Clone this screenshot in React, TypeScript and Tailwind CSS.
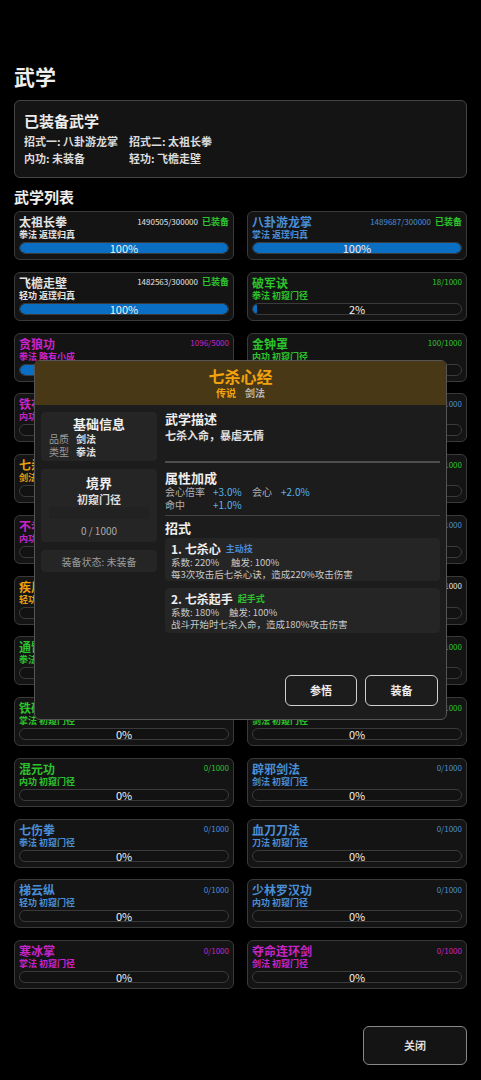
import React from 'react';

// ── 데이터 ────────────────────────────────────────────────────────────────

type Tone = 'white' | 'blue' | 'green' | 'purple' | 'orange';

const TONES: Record<Tone, string> = {
  white: 'text-[#e4e4e4]',
  blue: 'text-[#4a8fd6]',
  green: 'text-[#2cc42c]',
  purple: 'text-[#c824c8]',
  orange: 'text-[#e8a010]',
};

type Skill = {
  name: string;
  tone: Tone;
  prog: string;
  type: string;
  level: string;
  pct: number;
  equipped?: boolean;
};

const SKILLS: Skill[] = [
  { name: '太祖长拳', tone: 'white', prog: '1490505/300000', type: '拳法', level: '返璞归真', pct: 100, equipped: true },
  { name: '八卦游龙掌', tone: 'blue', prog: '1489687/300000', type: '掌法', level: '返璞归真', pct: 100, equipped: true },
  { name: '飞檐走壁', tone: 'white', prog: '1482563/300000', type: '轻功', level: '返璞归真', pct: 100, equipped: true },
  { name: '破军诀', tone: 'green', prog: '18/1000', type: '拳法', level: '初窥门径', pct: 2 },
  { name: '贪狼功', tone: 'purple', prog: '1096/5000', type: '拳法', level: '略有小成', pct: 22 },
  { name: '金钟罩', tone: 'green', prog: '100/1000', type: '内功', level: '初窥门径', pct: 10 },
  { name: '铁布衫', tone: 'purple', prog: '0/1000', type: '内功', level: '初窥门径', pct: 0 },
  { name: '太极剑', tone: 'blue', prog: '0/1000', type: '剑法', level: '初窥门径', pct: 0 },
  { name: '七杀心经', tone: 'orange', prog: '0/1000', type: '剑法', level: '初窥门径', pct: 0 },
  { name: '罗汉拳', tone: 'green', prog: '0/1000', type: '拳法', level: '初窥门径', pct: 0 },
  { name: '不老长春功', tone: 'purple', prog: '0/1000', type: '内功', level: '初窥门径', pct: 0 },
  { name: '草上飞', tone: 'blue', prog: '0/1000', type: '轻功', level: '初窥门径', pct: 0 },
  { name: '疾风步', tone: 'orange', prog: '0/1000', type: '轻功', level: '初窥门径', pct: 0 },
  { name: '长拳', tone: 'white', prog: '0/1000', type: '拳法', level: '初窥门径', pct: 0 },
  { name: '通臂拳', tone: 'green', prog: '0/1000', type: '拳法', level: '初窥门径', pct: 0 },
  { name: '开山掌', tone: 'green', prog: '0/1000', type: '掌法', level: '初窥门径', pct: 0 },
  { name: '铁砂掌', tone: 'green', prog: '0/1000', type: '掌法', level: '初窥门径', pct: 0 },
  { name: '清风剑法', tone: 'green', prog: '0/1000', type: '剑法', level: '初窥门径', pct: 0 },
  { name: '混元功', tone: 'green', prog: '0/1000', type: '内功', level: '初窥门径', pct: 0 },
  { name: '辟邪剑法', tone: 'blue', prog: '0/1000', type: '剑法', level: '初窥门径', pct: 0 },
  { name: '七伤拳', tone: 'blue', prog: '0/1000', type: '拳法', level: '初窥门径', pct: 0 },
  { name: '血刀刀法', tone: 'blue', prog: '0/1000', type: '刀法', level: '初窥门径', pct: 0 },
  { name: '梯云纵', tone: 'blue', prog: '0/1000', type: '轻功', level: '初窥门径', pct: 0 },
  { name: '少林罗汉功', tone: 'blue', prog: '0/1000', type: '内功', level: '初窥门径', pct: 0 },
  { name: '寒冰掌', tone: 'purple', prog: '0/1000', type: '掌法', level: '初窥门径', pct: 0 },
  { name: '夺命连环剑', tone: 'purple', prog: '0/1000', type: '剑法', level: '初窥门径', pct: 0 },
];

// ── 카드 ──────────────────────────────────────────────────────────────────

function SkillCard({ s }: { s: Skill }) {
  const tone = TONES[s.tone];
  return (
    <div className="h-[49px] rounded-[6px] border-[1.5px] border-[#3a3a3a] bg-[#141414] px-[4px] pt-[2px]">
      <div className="flex h-[15px] items-center justify-between">
        <span className={`text-[12px] font-bold leading-[15px] ${tone}`}>{s.name}</span>
        <span className="flex items-center gap-[4px]">
          <span className={`text-[8px] leading-[10px] ${tone}`}>{s.prog}</span>
          {s.equipped && <span className="text-[9px] font-bold leading-[10px] text-[#2cc42c]">已装备</span>}
        </span>
      </div>
      <div className={`h-[12px] text-[9px] font-bold leading-[12px] ${tone}`}>
        {s.type} {s.level}
      </div>
      <div className="relative mt-[1px] h-[12px]">
        <div className="h-full overflow-hidden rounded-full border border-[#3a3a3a] bg-[#121212]">
          <div className="h-full rounded-full bg-[#0a6fc2]" style={{ width: `${s.pct}%` }} />
        </div>
        <span className="absolute inset-x-0 top-0 text-center text-[11px] leading-[12px] text-[#f0f0f0]">
          {s.pct}%
        </span>
      </div>
    </div>
  );
}

// ── 모달 ──────────────────────────────────────────────────────────────────

function DetailModal() {
  return (
    <div className="absolute left-[34px] top-[360px] flex h-[360px] w-[413px] flex-col overflow-hidden rounded-[6px] border border-[#555] bg-[#1c1c1c]">
      {/* 헤더 */}
      <div className="flex h-[44px] shrink-0 flex-col items-center justify-center bg-[#483816]">
        <div className="text-[16px] font-bold leading-[19px] text-[#f2a20c]">七杀心经</div>
        <div className="flex gap-[9px] text-[10px] font-bold leading-[14px]">
          <span className="text-[#f2a20c]">传说</span>
          <span className="text-[#b8b8b8]">剑法</span>
        </div>
      </div>

      <div className="flex flex-1 gap-[8px] px-[6px] pt-[7px]">
        {/* 왼쪽 */}
        <div className="flex w-[116px] shrink-0 flex-col gap-[8px]">
          <div className="rounded-[4px] bg-[#252525] px-[8px] pb-[3px] pt-[3px]">
            <div className="text-center text-[13px] font-bold leading-[17px] text-[#eee]">基础信息</div>
            <div className="flex gap-[7px] text-[10px] leading-[13px]">
              <span className="text-[#9a9a9a]">品质</span>
              <span className="font-bold text-[#e0e0e0]">剑法</span>
            </div>
            <div className="flex gap-[7px] text-[10px] leading-[13px]">
              <span className="text-[#9a9a9a]">类型</span>
              <span className="font-bold text-[#e0e0e0]">拳法</span>
            </div>
          </div>
          <div className="rounded-[4px] bg-[#252525] px-[8px] pb-[4px] pt-[6px] text-center">
            <div className="text-[13px] font-bold leading-[16px] text-[#eee]">境界</div>
            <div className="text-[11px] font-bold leading-[16px] text-[#ddd]">初窥门径</div>
            <div className="h-[12px] rounded-[3px] bg-[#222]" />
            <div className="mt-[5px] text-[10px] leading-[14px] text-[#aaa]">0 / 1000</div>
          </div>
          <div className="flex h-[22px] items-center justify-center rounded-[4px] bg-[#252525] text-[10px] text-[#9a9a9a]">
            装备状态: 未装备
          </div>
        </div>

        {/* 오른쪽 */}
        <div className="flex flex-1 flex-col">
          <div className="text-[13px] font-bold leading-[14px] text-[#eee]">武学描述</div>
          <div className="mt-[2px] text-[11px] font-bold leading-[14px] text-[#e0e0e0]">七杀入命，暴虐无情</div>
          <div className="mt-[19px] h-[2px] bg-[#4e4e4e]" />
          <div className="mt-[7px] text-[13px] font-bold leading-[15px] text-[#eee]">属性加成</div>
          <div className="grid grid-cols-[48px_39px_29px_auto] text-[10px] leading-[13px]">
            <span className="text-[#b0b0b0]">会心倍率</span>
            <span className="text-[#5ab4e6]">+3.0%</span>
            <span className="text-[#b0b0b0]">会心</span>
            <span className="text-[#5ab4e6]">+2.0%</span>
            <span className="text-[#b0b0b0]">命中</span>
            <span className="text-[#5ab4e6]">+1.0%</span>
          </div>
          <div className="mt-[4px] h-px bg-[#444]" />
          <div className="mt-[4px] text-[13px] font-bold leading-[15px] text-[#eee]">招式</div>

          <div className="mt-[3px] rounded-[4px] bg-[#252525] px-[6px] pb-[1px] pt-[3px]">
            <div className="flex items-center gap-[5px] leading-[15px]">
              <span className="text-[12px] font-bold text-[#eee]">1. 七杀心</span>
              <span className="text-[9px] font-bold text-[#4a8ad8]">主动技</span>
            </div>
            <div className="flex text-[9.5px] leading-[12px] text-[#c8c8c8]">
              <span className="w-[60px]">系数: 220%</span>
              <span>触发: 100%</span>
            </div>
            <div className="text-[9.5px] leading-[12px] text-[#c8c8c8]">每3次攻击后七杀心诀，造成220%攻击伤害</div>
          </div>

          <div className="mt-[7px] rounded-[4px] bg-[#252525] px-[6px] pb-[3px] pt-[3px]">
            <div className="flex items-center gap-[5px] leading-[15px]">
              <span className="text-[12px] font-bold text-[#eee]">2. 七杀起手</span>
              <span className="text-[9px] font-bold text-[#2cc42c]">起手式</span>
            </div>
            <div className="flex text-[9.5px] leading-[12px] text-[#c8c8c8]">
              <span className="w-[58px]">系数: 180%</span>
              <span>触发: 100%</span>
            </div>
            <div className="text-[9.5px] leading-[12px] text-[#c8c8c8]">战斗开始时七杀入命，造成180%攻击伤害</div>
          </div>
        </div>
      </div>

      {/* 버튼 */}
      <div className="flex justify-end gap-[8px] pb-[13px] pr-[8px]">
        <button
          type="button"
          className="h-[31px] w-[72px] rounded-[6px] border-[1.5px] border-[#cfcfcf] bg-[#1c1c1c] text-[11px] font-bold text-[#eee]"
        >
          参悟
        </button>
        <button
          type="button"
          className="h-[31px] w-[73px] rounded-[6px] border-[1.5px] border-[#cfcfcf] bg-[#1c1c1c] text-[11px] font-bold text-[#eee]"
        >
          装备
        </button>
      </div>
    </div>
  );
}

// ── App ───────────────────────────────────────────────────────────────────

export default function App() {
  return (
    <div className="relative min-h-[1080px] bg-black px-[14px] pt-[62px] font-['Noto_Sans_CJK_SC','Noto_Sans',sans-serif] text-[#e6e6e6]">
      <h1 className="text-[21px] font-bold leading-[28px] text-[#eee]">武学</h1>

      {/* 已装备 */}
      <div className="mt-[10px] rounded-[6px] border-[1.5px] border-[#444] bg-[#141414] px-[9px] pb-[10px] pt-[10px]">
        <div className="text-[15px] font-bold leading-[20px] text-[#eee]">已装备武学</div>
        <div className="mt-[2px] grid grid-cols-[105px_1fr] text-[11px] font-bold leading-[17px] text-[#dcdcdc]">
          <span>招式一: 八卦游龙掌</span>
          <span>招式二: 太祖长拳</span>
          <span>内功: 未装备</span>
          <span>轻功: 飞檐走壁</span>
        </div>
      </div>

      <h2 className="mt-[9px] text-[15px] font-bold leading-[20px] text-[#eee]">武学列表</h2>

      <div className="mt-[4px] grid grid-cols-2 gap-x-[13px] gap-y-[11.75px]">
        {SKILLS.map((s) => (
          <SkillCard key={s.name} s={s} />
        ))}
      </div>

      <div className="mt-[37px] flex justify-end">
        <button
          type="button"
          className="h-[39px] w-[104px] rounded-[6px] border-[1.5px] border-[#888] bg-[#141414] text-[11px] font-bold text-[#ddd]"
        >
          关闭
        </button>
      </div>

      <DetailModal />
    </div>
  );
}
